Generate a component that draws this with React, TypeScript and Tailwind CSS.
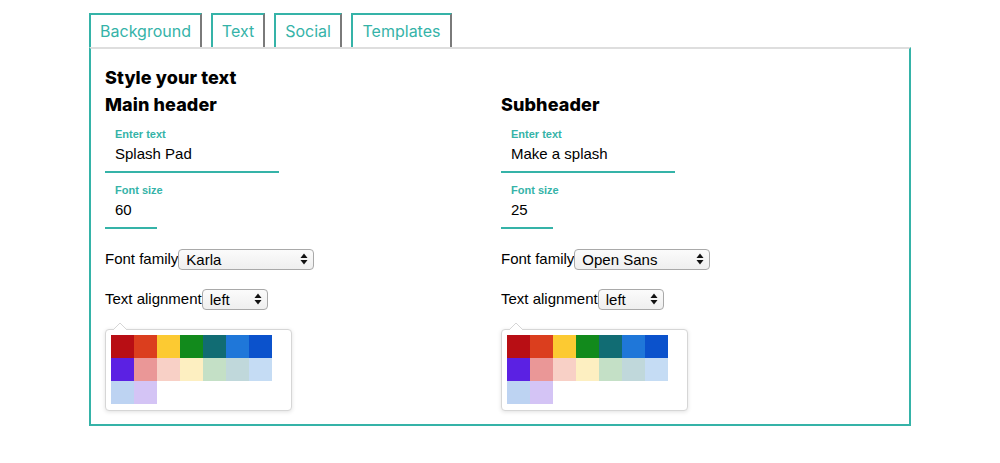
import React from "react";

const swatches = [
  "#b80e14", "#db3e1e", "#fcca32", "#128a1c", "#116c73", "#1f77d9", "#0b52cc",
  "#5b21e3", "#ea9797", "#f8d0c6", "#fdefc1", "#c4e0c6", "#c0d8db", "#c5dcf4",
  "#bdd3f2", "#d4c4f5",
];

function Arrows() {
  return (
    <svg width="8" height="12" viewBox="0 0 8 12" className="shrink-0">
      <path d="M4 0.5 L7.5 5 L0.5 5 Z" fill="#111" />
      <path d="M4 11.5 L7.5 7 L0.5 7 Z" fill="#111" />
    </svg>
  );
}

function Select({ value, width }: { value: string; width: string }) {
  return (
    <div
      className={`${width} h-[21px] flex items-center justify-between pl-[7px] pr-[5px] rounded-[4px] border border-[#a9a9a9] bg-gradient-to-b from-[#fbfbfb] to-[#efefef] text-[15px] text-black`}
    >
      <span className="leading-none">{value}</span>
      <Arrows />
    </div>
  );
}

function Field({ label, value, width }: { label: string; value: string; width: string }) {
  return (
    <div className={`${width} border-b-2 border-[#35b3a8] pl-[10px] pt-[8px] pb-[8px] whitespace-nowrap`}>
      <div className="text-[11px] font-bold text-[#35b3a8] leading-[14px]">{label}</div>
      <div className="text-[15px] text-black leading-[18px] mt-[4px]">{value}</div>
    </div>
  );
}

function Column({ title, text, size, font }: { title: string; text: string; size: string; font: string }) {
  return (
    <div className="flex flex-col">
      <div className="font-['Inter',sans-serif] font-extrabold text-[18px] leading-[22px] text-black tracking-[0.1px]">{title}</div>
      <div className="mt-[3px]">
        <Field label="Enter text" value={text} width="w-[174px]" />
        <div className="mt-[2px]">
          <Field label="Font size" value={size} width="w-[52px]" />
        </div>
      </div>
      <div className="flex items-center h-[22px] mt-[19px] text-[15px] text-black">
        <span>Font family</span>
        <Select value={font} width="w-[136px]" />
      </div>
      <div className="flex items-center h-[22px] mt-[18px] text-[15px] text-black">
        <span>Text alignment</span>
        <Select value="left" width="w-[66px]" />
      </div>
      <div className="relative mt-[19px] w-[187px]">
        <svg width="14" height="8" viewBox="0 0 14 8" className="absolute left-[8px] -top-[7px]">
          <path d="M0 8 L7 1 L14 8" fill="white" stroke="#d6d6d6" strokeWidth="1" />
        </svg>
        <div className="rounded-[4px] border border-[#d6d6d6] bg-white shadow-[0_1px_4px_rgba(0,0,0,0.12)] p-[5px] pb-[6px]">
          <div className="grid grid-cols-[repeat(7,23px)]">
            {swatches.map((c) => (
              <div key={c} className="w-[23px] h-[23px]" style={{ background: c }} />
            ))}
          </div>
        </div>
      </div>
    </div>
  );
}

export default function App() {
  const tabs = [
    { name: "Background", w: "w-[113px]" },
    { name: "Text", w: "w-[54px]" },
    { name: "Social", w: "w-[68px]" },
    { name: "Templates", w: "w-[101px]" },
  ];
  return (
    <div className="w-[1000px] h-[463px] bg-white font-['Liberation_Sans',Arial,sans-serif] pt-[13px] pl-[89px]">
      <div className="w-[822px]">
        <div className="flex gap-[9px]">
          {tabs.map((t) => (
            <div
              key={t.name}
              className={`${t.w} h-[34px] flex items-center justify-center border-t-2 border-l-2 border-r-2 border-t-[#35b3a8] border-l-[#35b3a8] border-r-[#7a7a7a] text-[#35b3a8] font-['Inter',sans-serif] text-[16px] font-normal`}
            >
              {t.name}
            </div>
          ))}
        </div>
        <div className="h-[379px] border-t-2 border-t-[#dedede] border-l-2 border-r-2 border-b-2 border-l-[#35b3a8] border-r-[#35b3a8] border-b-[#35b3a8] pl-[14px] pt-[18px]">
          <div className="font-['Inter',sans-serif] font-extrabold text-[18px] leading-[22px] text-black tracking-[0.1px]">Style your text</div>
          <div className="grid grid-cols-[396px_396px] mt-[5px]">
            <Column title="Main header" text="Splash Pad" size="60" font="Karla" />
            <Column title="Subheader" text="Make a splash" size="25" font="Open Sans" />
          </div>
        </div>
      </div>
    </div>
  );
}
